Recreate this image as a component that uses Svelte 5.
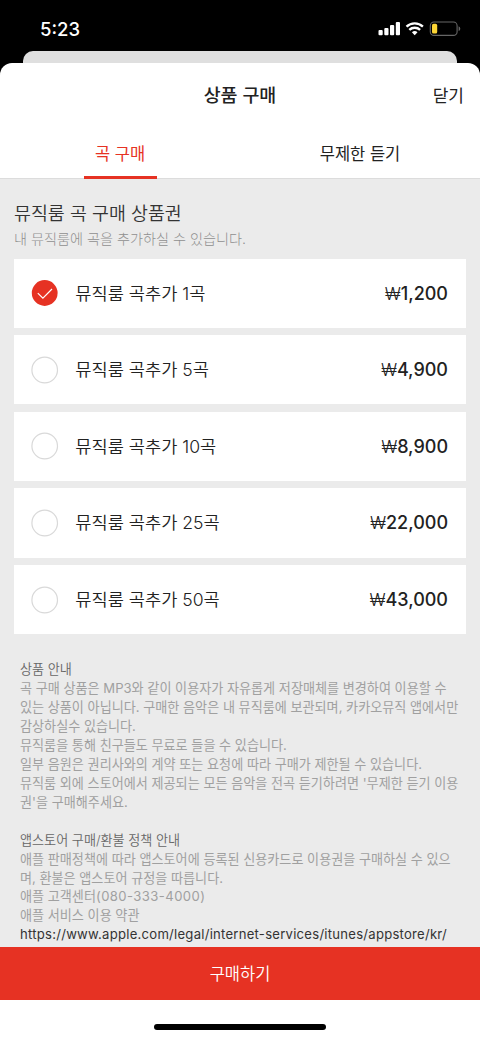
<script>
  const products = [
    { name: '뮤직룸 곡추가 1곡', price: '1,200' },
    { name: '뮤직룸 곡추가 5곡', price: '4,900' },
    { name: '뮤직룸 곡추가 10곡', price: '8,900' },
    { name: '뮤직룸 곡추가 25곡', price: '22,000' },
    { name: '뮤직룸 곡추가 50곡', price: '43,000' }
  ];
  const guide = [
    '곡 구매 상품은 MP3와 같이 이용자가 자유롭게 저장매체를 변경하여 이용할 수',
    '있는 상품이 아닙니다. 구매한 음악은 내 뮤직룸에 보관되며, 카카오뮤직 앱에서만',
    '감상하실수 있습니다.',
    '뮤직룸을 통해 친구들도 무료로 들을 수 있습니다.',
    '일부 음원은 권리사와의 계약 또는 요청에 따라 구매가 제한될 수 있습니다.',
    "뮤직룸 외에 스토어에서 제공되는 모든 음악을 전곡 듣기하려면 '무제한 듣기 이용",
    "권'을 구매해주세요."
  ];
  const policy = [
    '애플 판매정책에 따라 앱스토어에 등록된 신용카드로 이용권을 구매하실 수 있으',
    '며, 환불은 앱스토어 규정을 따릅니다.'
  ];
  let selected = $state(0);
</script>

<div class="screen">
  <div class="status">
    <span class="time">5:23</span>
    <svg class="indicators" width="84" height="18" viewBox="0 0 84 18">
      <g fill="#fff">
        <rect x="0.5" y="10" width="4.2" height="5.2" rx="1" />
        <rect x="6.3" y="8" width="4.2" height="7.2" rx="1" />
        <rect x="12" y="5" width="4.2" height="10.2" rx="1" />
        <rect x="17.8" y="2" width="4.2" height="13.2" rx="1" />
        <path d="M36.7 15.2l-2.8-2.9a4.2 4.2 0 0 1 5.6 0z" />
      </g>
      <g fill="none" stroke="#fff" stroke-width="2.3">
        <path d="M28.5 6.6a12 12 0 0 1 16.4 0" />
        <path d="M31.3 9.9a7.8 7.8 0 0 1 10.8 0" />
      </g>
      <rect x="52.3" y="2" width="26.8" height="13.4" rx="3.7" fill="none" stroke="#666" stroke-width="1.1" />
      <rect x="54" y="3.8" width="5.2" height="9.8" rx="1.6" fill="#fcd535" />
      <path d="M80.6 6.3q1.7.7 1.7 2.4t-1.7 2.4z" fill="#666" />
    </svg>
  </div>
  <div class="behind"></div>
  <div class="sheet">
    <header>
      <span></span>
      <h1>상품 구매</h1>
      <button class="close">닫기</button>
    </header>
    <nav>
      <div class="tab active"><span>곡 구매</span></div>
      <div class="tab"><span>무제한 듣기</span></div>
    </nav>
    <main>
      <h2>뮤직룸 곡 구매 상품권</h2>
      <p class="sub">내 뮤직룸에 곡을 추가하실 수 있습니다.</p>
      <div class="list">
        {#each products as p, i}
          <button class="card" onclick={() => (selected = i)}>
            <svg width="28" height="28" viewBox="0 0 28 28">
              {#if selected === i}
                <circle cx="13.7" cy="14" r="12.9" fill="#e63223" />
                <path d="M6.8 14.1l5.1 5.1 9.1-9.2" fill="none" stroke="#fff" stroke-width="1.2" />
              {:else}
                <circle cx="13.7" cy="14" r="12.8" fill="#fff" stroke="#d9d9d9" stroke-width="1.2" />
              {/if}
            </svg>
            <span class="name">{p.name}</span>
            <span class="price"><span class="won">₩</span>{p.price}</span>
          </button>
        {/each}
      </div>
      <section>
        <h3>상품 안내</h3>
        {#each guide as line}<p>{line}</p>{/each}
      </section>
      <section>
        <h3>앱스토어 구매/환불 정책 안내</h3>
        {#each policy as line}<p>{line}</p>{/each}
        <p>애플 고객센터<span class="phone">(080-333-4000)</span></p>
        <p>애플 서비스 이용 약관</p>
        <p class="link">https://www.apple.com/legal/internet-services/itunes/appstore/kr/</p>
      </section>
    </main>
    <button class="buy">구매하기</button>
    <footer><i></i></footer>
  </div>
</div>

<style>
  :global(body) { margin: 0; background: #000; }
  .screen {
    width: 480px; height: 1039px; overflow: hidden; background: #000;
    display: flex; flex-direction: column;
    font-family: Inter, "Noto Sans CJK KR", sans-serif; color: #222;
    white-space: nowrap;
  }
  h1, h2, h3, p { margin: 0; font-weight: 400; }
  button { border: 0; padding: 0; font: inherit; color: inherit; background: none; }
  .status {
    height: 51px; flex: none; box-sizing: border-box; padding: 7px 18px 0 40px;
    display: flex; justify-content: space-between; align-items: flex-start;
  }
  .time { color: #fff; font-size: 18.5px; font-weight: 550; line-height: 44px; }
  .indicators { margin-top: 13px; }
  .behind { height: 11.5px; flex: none; margin: 0 23px; background: #dfdfdf; border-radius: 10px 10px 0 0; }
  .sheet {
    flex: 1; min-height: 0; background: #fff; border-radius: 12px 12px 0 0; overflow: hidden;
    display: flex; flex-direction: column;
  }
  header {
    height: 62px; flex: none; padding: 0 16px; display: grid;
    grid-template-columns: 1fr auto 1fr; align-items: center;
  }
  h1 { font-size: 18.4px; font-weight: 500; }
  .close { justify-self: end; font-size: 17px; font-weight: 400; padding-top: 1px; }
  nav { height: 53px; flex: none; display: flex; border-bottom: 1px solid #dcdcdc; }
  .tab { flex: 1; display: flex; justify-content: center; font-size: 16.5px; line-height: 58px; }
  .tab span { height: 54px; box-sizing: border-box; }
  .active { color: #e63223; font-weight: 400; }
  .active span { width: 73px; text-align: center; border-bottom: 3px solid #e63223; }
  main { flex: 1; min-height: 0; overflow: hidden; background: #ebebeb; padding: 21.5px 14px 0; }
  h2 { font-size: 18.4px; font-weight: 350; line-height: 27px; color: #333; }
  .sub { font-size: 14.15px; line-height: 24px; font-weight: 300; color: #8f8f8f; }
  .list { display: flex; flex-direction: column; gap: 7.2px; margin-top: 7.5px; margin-bottom: 26px; }
  .card {
    height: 69.4px; background: #fff; display: flex; align-items: center;
    padding: 0 18px 0 17px; text-align: left;
  }
  .name { margin-left: 16.3px; font-size: 17.6px; font-weight: 350; line-height: 26px; padding-top: 1px; }
  .price { margin-left: auto; font-size: 18px; font-weight: 500; }
  .won { font-weight: 300; font-size: 17px; }
  section { padding: 0 6px; margin-bottom: 18.8px; font-size: 13.1px; line-height: 18.95px; font-weight: 300; color: #a0a0a0; }
  h3 { font-size: inherit; font-weight: 350; color: #666; }
  .phone { letter-spacing: 0.42px; }
  .link { color: #333; letter-spacing: 0.25px; }
  .buy { height: 52.4px; flex: none; background: #e63223; color: #fff; font-size: 16.5px; font-weight: 350; }
  footer { height: 39.4px; flex: none; display: flex; justify-content: center; }
  footer i { width: 172px; height: 6px; border-radius: 3px; background: #000; margin-top: 24.4px; }
</style>
